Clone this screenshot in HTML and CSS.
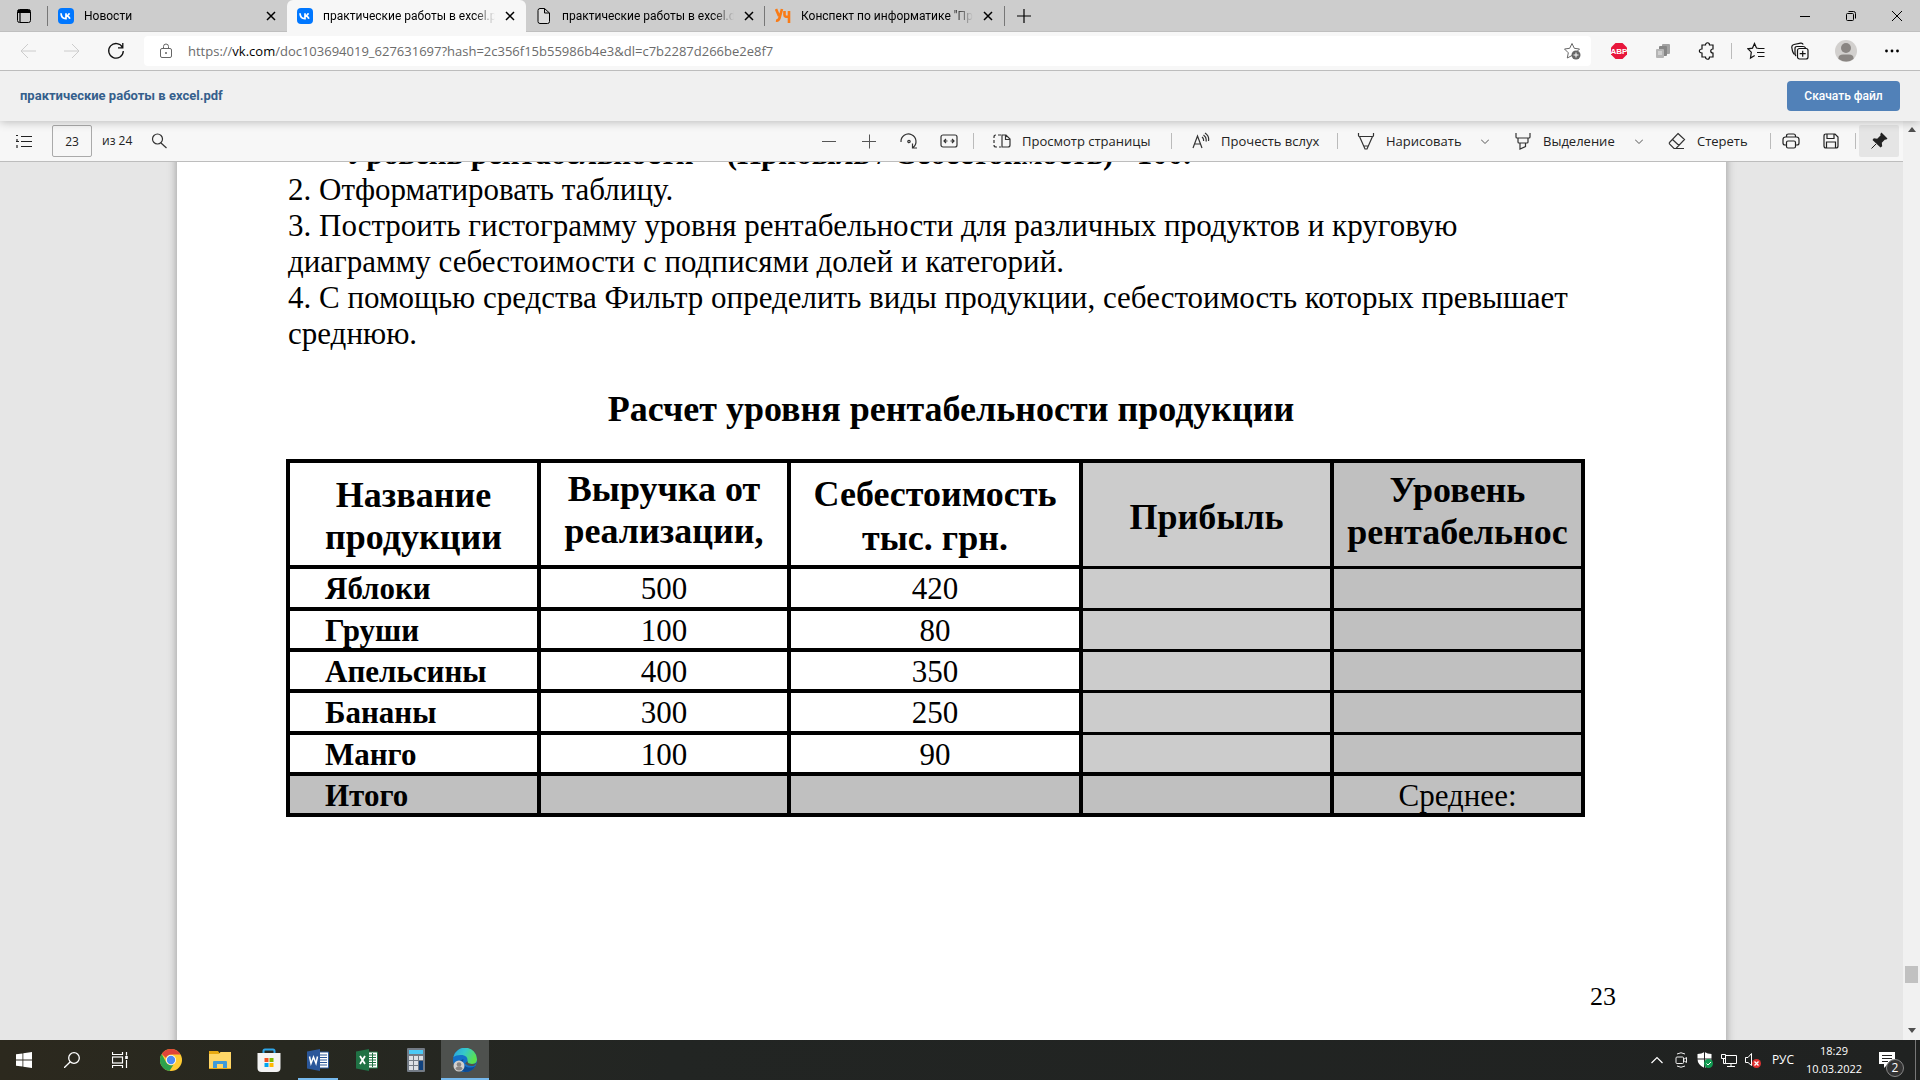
FILE: index.html
```html
<!DOCTYPE html>
<html lang="ru">
<head>
<meta charset="utf-8">
<title>практические работы в excel.pdf</title>
<link rel="stylesheet" href="styles.css">
</head>
<body>
<header class="tabstrip">
  <button class="tab-actions" aria-label="Меню вкладок"><svg width="16" height="16" viewBox="0 0 16 16"><rect x="1.500" y="1.500" width="13" height="13" rx="2" fill="none" stroke="#000"/><path d="M2 3.500h12" stroke="#000" stroke-width="3"/><path d="M4 4v10" stroke="#000" stroke-width="1.200"/></svg></button>
  <nav class="tabs">
    <div class="tab divided">
      <svg class="favicon" width="16" height="16" viewBox="0 0 16 16"><rect width="16" height="16" rx="4" fill="#07f"/><path d="M3 5.300c.2 3.400 1.800 5.400 4.800 5.400h.2V5.300M8 8c1.600-.1 2.900-1.200 3.400-2.700M8 8c1.900 0 3.300 1 3.900 2.700" fill="none" stroke="#fff" stroke-width="1.700"/></svg>
      <a class="tab-title" href="#">Новости</a>
      <button class="tab-close" aria-label="Закрыть"><svg width="10" height="10" viewBox="0 0 10 10"><path d="M1 1l8 8M9 1l-8 8"/></svg></button>
    </div>
    <div class="tab active">
      <svg class="favicon" width="16" height="16" viewBox="0 0 16 16"><rect width="16" height="16" rx="4" fill="#07f"/><path d="M3 5.300c.2 3.400 1.800 5.400 4.800 5.400h.2V5.300M8 8c1.600-.1 2.900-1.200 3.400-2.700M8 8c1.900 0 3.300 1 3.900 2.700" fill="none" stroke="#fff" stroke-width="1.700"/></svg>
      <a class="tab-title" href="#">практические работы в excel.pdf</a>
      <button class="tab-close" aria-label="Закрыть"><svg width="10" height="10" viewBox="0 0 10 10"><path d="M1 1l8 8M9 1l-8 8"/></svg></button>
    </div>
    <div class="tab">
      <svg class="favicon" width="16" height="16" viewBox="0 0 16 16"><path d="M4 .5h4.500l5 4.500v8.500q0 2-2 2H4q-2 0-2-2v-11q0-2 2-2zM8.500.5V5h5" fill="#dcdcdc" stroke="#000"/></svg>
      <a class="tab-title" href="#">практические работы в excel.docx</a>
      <button class="tab-close" aria-label="Закрыть"><svg width="10" height="10" viewBox="0 0 10 10"><path d="M1 1l8 8M9 1l-8 8"/></svg></button>
    </div>
    <div class="tab divided">
      <svg class="favicon" width="16" height="16" viewBox="0 0 16 16"><path d="M1 1l3 7M7 1L4.500 10q-1 3-3.500 2.500M9.500 3v4q0 2.500 4 1.500M14 3v12" fill="none" stroke="#f97b16" stroke-width="2.600"/></svg>
      <a class="tab-title" href="#">Конспект по информатике "Практическая</a>
      <button class="tab-close" aria-label="Закрыть"><svg width="10" height="10" viewBox="0 0 10 10"><path d="M1 1l8 8M9 1l-8 8"/></svg></button>
    </div>
    <button class="new-tab" aria-label="Новая вкладка"><svg width="16" height="16" viewBox="0 0 16 16"><path d="M8 1v14M1 8h14" stroke="#000" stroke-width="1.200"/></svg></button>
  </nav>
  <div class="window-buttons">
    <button aria-label="Свернуть"><svg width="10" height="10" viewBox="0 0 10 10"><path d="M0 5.500h10"/></svg></button>
    <button aria-label="Восстановить"><svg width="10" height="10" viewBox="0 0 10 10"><rect x=".5" y="2.500" width="7" height="7" rx="1"/><path d="M2.500 .5h5q2 0 2 2v5"/></svg></button>
    <button aria-label="Закрыть окно"><svg width="10" height="10" viewBox="0 0 10 10"><path d="M0 0l10 10M10 0L0 10"/></svg></button>
  </div>
</header>

<div class="navbar">
  <div class="nav-buttons">
    <button aria-label="Назад" disabled><svg width="16" height="16" viewBox="0 0 16 16" stroke="#ccc"><path d="M16 8H1M8 1L1 8l7 7"/></svg></button>
    <button aria-label="Вперёд" disabled><svg width="16" height="16" viewBox="0 0 16 16" stroke="#ccc"><path d="M0 8h15M8 1l7 7-7 7"/></svg></button>
    <button aria-label="Обновить"><svg width="18" height="18" viewBox="0 0 18 18" stroke="#111" stroke-width="1.300"><path d="M15.500 5.500A7.300 7.300 0 1 0 16.300 9M15.800 1v4.800H11"/></svg></button>
  </div>
  <div class="address">
    <svg width="14" height="16" viewBox="0 0 14 16" stroke="#666"><rect x="1.500" y="5.500" width="11" height="9" rx="1.500"/><path d="M4.500 5V3.500q0-2.500 2.500-2.500t2.500 2.500V5"/><circle cx="7" cy="10" r=".6" fill="#666"/></svg>
    <a class="url" href="#">https://<b>vk.com</b>/doc103694019_627631697?hash=2c356f15b55986b4e3&amp;dl=c7b2287d266be2e8f7</a>
    <button class="icon-button" aria-label="В избранное"><svg width="18" height="18" viewBox="0 0 18 18" stroke="#666"><path d="M9 1.500l2.300 4.800 5.200.7-3 3M9 13.500l-4.700 2.500 1-5.200L1.500 7l5.200-.7L9 1.500"/><circle cx="13" cy="13" r="4.500" fill="#666" stroke="none"/><path d="M13 10.500v5M10.500 13h5" stroke="#fff"/></svg></button>
  </div>
  <div class="extensions">
    <button aria-label="Adblock Plus"><svg width="18" height="18" viewBox="0 0 18 18"><path d="M5.500 1h7L17 5.500v7L12.500 17h-7L1 12.500v-7z" fill="#e8173c"/><text class="abp" x="9" y="12" text-anchor="middle">ABP</text></svg></button>
    <button aria-label="Расширение"><svg width="16" height="16" viewBox="0 0 16 16"><rect x="7" y="1" width="8" height="10" rx="1" fill="#a2a2a2"/><rect x="4" y="3" width="8" height="10" rx="1" fill="#868686"/><rect x="1" y="6" width="8" height="9" rx="1" fill="#b5b5b5"/><path d="M3 8h4v4H3z" fill="#d0d0d0"/></svg></button>
    <button aria-label="Расширения"><svg width="18" height="18" viewBox="0 0 18 18" stroke="#111" stroke-width="1.200"><path d="M4 3h3.500c0-3 4-3 4 0H15v4c-3 0-3 4 0 4v4h-3.500c0 3-4 3-4 0H4v-4c-3.500 0-3.500-4 0-4z"/></svg></button>
    <span class="divider"></span>
    <button aria-label="Избранное"><svg width="18" height="18" viewBox="0 0 18 18" stroke="#111" stroke-width="1.200"><path d="M12 6.500L9.500 6 7.500 1.500l-2 4.600L1 6.800l3.300 3.300L3.500 16l4.200-2.500M11 6.500h6.500M10 10.500h7.500M11 14.500h6.500"/></svg></button>
    <button aria-label="Коллекции"><svg width="18" height="18" viewBox="0 0 18 18" stroke="#111" stroke-width="1.200"><path d="M3.500 12.500Q2 11 1.500 9L.8 5.500Q.5 3 3 2.500l6.500-1.400q2-.3 2.700 1.400"/><path d="M5 14q-1-1-1-3V6.500q0-2 2-2h6q2 0 2.500 1.500"/><rect x="6.500" y="6.500" width="10.500" height="10.500" rx="2"/><path d="M11.700 8.700v6M8.700 11.700h6"/></svg></button>
    <button class="profile" aria-label="Профиль"><svg width="22" height="22" viewBox="0 0 22 22"><circle cx="11" cy="11" r="11" fill="#d2d0ce"/><circle cx="11" cy="8" r="5" fill="#8a8683"/><path d="M3.500 19Q3 14.500 8 14.500h6q5 0 4.500 4.500-7 5-15 0" fill="#8a8683"/></svg></button>
    <button aria-label="Ещё"><svg class="solid" width="16" height="16" viewBox="0 0 16 16"><circle cx="2.500" cy="8" r="1.400"/><circle cx="8" cy="8" r="1.400"/><circle cx="13.500" cy="8" r="1.400"/></svg></button>
  </div>
</div>

<div class="vk-bar">
  <a class="doc-name" href="#">практические работы в excel.pdf</a>
  <button class="download">Скачать файл</button>
</div>

<main class="viewer">
  <div class="pane">
    <div class="pdf-bar">
      <div class="pdf-left">
        <button class="icon-button" aria-label="Оглавление"><svg width="16" height="16" viewBox="0 0 16 16" stroke="#222"><path d="M5 3.500h11M5 8.500h11M5 13.500h11M0 2.500h2M1 6v2M3 8.500h-1M0 8.500h2M1 12v3" stroke-width="1.200"/></svg></button>
        <input class="page-field" type="text" value="23" aria-label="Страница">
        <span class="page-count">из 24</span>
        <button class="icon-button" aria-label="Поиск"><svg width="16" height="16" viewBox="0 0 16 16" stroke="#333" stroke-width="1.200"><circle cx="6.500" cy="6" r="5"/><path d="M10 10l5.500 5"/></svg></button>
      </div>
      <div class="pdf-right">
        <button class="zoom" aria-label="Уменьшить"><svg width="16" height="16" viewBox="0 0 16 16" stroke="#555"><path d="M1 8.500h14"/></svg></button>
        <button class="zoom" aria-label="Увеличить"><svg width="16" height="16" viewBox="0 0 16 16" stroke="#555"><path d="M1 8.500h14M8.500 1.500v14"/></svg></button>
        <button class="zoom" aria-label="Повернуть"><svg width="18" height="18" viewBox="0 0 18 18" stroke="#333" stroke-width="1.200"><path d="M1 10A7.500 7.500 0 1 1 13 15.500M12.500 11.500v4.500H17"/><circle cx="9" cy="9.500" r="1.200"/></svg></button>
        <button class="zoom" aria-label="По ширине"><svg width="18" height="18" viewBox="0 0 18 18" stroke="#333" stroke-width="1.200"><rect x="1" y="3" width="16" height="12" rx="2"/><path d="M4 9h3.500M10.500 9H14M6 7L4 9l2 2M12 7l2 2-2 2"/></svg></button>
        <span class="divider"></span>
        <button class="tool view"><svg width="18" height="18" viewBox="0 0 18 18" stroke="#333" stroke-width="1.200"><path d="M8 3H5M3 3q-2 0-2 2v1M1 8v3M1 13q0 2 2 2h1M6 15h2"/><path d="M9 3h4l4 4v6q0 2-2 2H9zM12.500 3v4.500H17"/></svg>Просмотр страницы</button>
        <span class="divider"></span>
        <button class="tool read"><svg width="18" height="18" viewBox="0 0 18 18" stroke="#333" stroke-width="1.200"><path d="M1 16L5.500 4 10 16M2.500 12h6M10 5q2 1.500 1.500 4M11.500 3q3.500 2.500 2.500 6.500M13 1q4.500 3 3.500 8"/></svg>Прочесть вслух</button>
        <span class="divider"></span>
        <button class="tool draw"><svg width="18" height="18" viewBox="0 0 18 18" stroke="#333" stroke-width="1.200"><path d="M1.500 1v2.500q0 1 1 1h13q1 0 1-1V1M2.500 4.500L8 17h2l5.500-12.500M7 14h4"/></svg>Нарисовать<span class="chevron"><svg width="8" height="5" viewBox="0 0 8 5" stroke="#555"><path d="M0 .5l4 4 4-4"/></svg></span></button>
        <button class="tool mark"><svg width="18" height="18" viewBox="0 0 18 18" stroke="#333" stroke-width="1.200"><path d="M2 1v4q0 1 1 1h12q1 0 1-1V1M4 6v4q0 1 1 1h8q1 0 1-1V6M6 11v6l5.500-2.500V11"/></svg>Выделение<span class="chevron"><svg width="8" height="5" viewBox="0 0 8 5" stroke="#555"><path d="M0 .5l4 4 4-4"/></svg></span></button>
        <button class="tool erase"><svg width="18" height="18" viewBox="0 0 18 18" stroke="#333" stroke-width="1.200"><path d="M10 1.500l6.500 6-8.500 9H6l-4.500-4.500q-.5-1 0-1.500zM4.500 7.500l6.500 6M8 16.500h8"/></svg>Стереть</button>
        <span class="divider"></span>
        <button class="zoom" aria-label="Печать"><svg width="18" height="18" viewBox="0 0 18 18" stroke="#222" stroke-width="1.200"><path d="M4.500 5V4q0-2 2-2h5q2 0 2 2v1M4.500 13H3q-2 0-2-2V7.500Q1 5 3.500 5h11Q17 5 17 7.500V11q0 2-2 2h-1.500"/><rect x="4.500" y="9" width="9" height="7" rx="1.500"/></svg></button>
        <button class="zoom" aria-label="Сохранить"><svg width="18" height="18" viewBox="0 0 18 18" stroke="#222" stroke-width="1.200"><path d="M4 2h9l3 3v9q0 2-2 2H4q-2 0-2-2V4q0-2 2-2zM5 2v4.500h7V2M4.500 16v-6h9v6"/></svg></button>
        <span class="divider"></span>
        <button class="zoom pinned" aria-label="Закрепить"><svg width="18" height="18" viewBox="0 0 18 18"><path d="M11.500.5l6 6-1.500 1.200-1-.2-3.200 3.300.4 3.400-1.700 1.300L2.500 8l1.300-1.700 3.400.4L10.500 3.500l-.2-1.500z" fill="#222"/><path d="M6 12l-4.500 4.500" stroke="#222"/></svg></button>
      </div>
    </div>
    <div class="document">
      <article class="sheet">
        <p class="formula">Уровень рентабельности = (Прибыль / Себестоимость) *100.</p>
        <p>2. Отформатировать таблицу.</p>
        <p>3. Построить гистограмму уровня рентабельности для различных продуктов и круговую<br>диаграмму себестоимости с подписями долей и категорий.</p>
        <p>4. С помощью средства Фильтр определить виды продукции, себестоимость которых превышает<br>среднюю.</p>
        <h1>Расчет уровня рентабельности продукции</h1>
        <table>
          <colgroup><col class="c-name"><col class="c-sales"><col class="c-cost"><col class="c-profit"><col class="c-level"></colgroup>
          <thead>
            <tr>
              <th class="h-name">Название<br>продукции</th>
              <th class="h-sales">Выручка от<br>реализации,</th>
              <th class="h-cost">Себестоимость<br>тыс. грн.</th>
              <th class="h-profit light">Прибыль</th>
              <th class="h-level dark">Уровень<br>рентабельнос</th>
            </tr>
          </thead>
          <tbody>
            <tr><th>Яблоки</th><td>500</td><td>420</td><td class="light"></td><td class="dark"></td></tr>
            <tr><th>Груши</th><td>100</td><td>80</td><td class="light"></td><td class="dark"></td></tr>
            <tr><th>Апельсины</th><td>400</td><td>350</td><td class="light"></td><td class="dark"></td></tr>
            <tr><th>Бананы</th><td>300</td><td>250</td><td class="light"></td><td class="dark"></td></tr>
            <tr><th>Манго</th><td>100</td><td>90</td><td class="light"></td><td class="dark"></td></tr>
          </tbody>
          <tfoot>
            <tr><th>Итого</th><td></td><td></td><td></td><td>Среднее:</td></tr>
          </tfoot>
        </table>
        <p class="folio">23</p>
      </article>
    </div>
  </div>
  <div class="scrollbar">
    <svg width="8" height="5" viewBox="0 0 8 5"><path d="M0 5l4-5 4 5z" fill="#505050"/></svg>
    <span class="thumb"></span>
    <svg width="8" height="5" viewBox="0 0 8 5"><path d="M0 0l4 5 4-5z" fill="#505050"/></svg>
  </div>
</main>

<footer class="taskbar">
  <div class="launchers">
    <button aria-label="Пуск"><svg class="solid" width="16" height="16" viewBox="0 0 16 16"><path d="M0 2.300L6.500 1.400v6.200H0zM7.300 1.300L16 0v7.600H7.300zM0 8.400h6.500v6.200L0 13.700zM7.300 8.400H16V16l-8.700-1.300z"/></svg></button>
    <button aria-label="Поиск"><svg width="16" height="16" viewBox="0 0 16 16" stroke="#fff" stroke-width="1.300"><circle cx="10" cy="6" r="5.300"/><path d="M6.300 9.800L0 16"/></svg></button>
    <button aria-label="Представление задач"><svg width="16" height="16" viewBox="0 0 16 16" stroke="#fff" stroke-width="1.200"><path d="M.5 0v2.500h10V0M.5 16v-2.500h10V16M14.500 0v3.500M14.500 8v8"/><rect x=".5" y="5" width="10" height="6"/><path d="M13.200 4h2.600v3h-2.600z" fill="#fff" stroke="none"/></svg></button>
  </div>
  <div class="apps">
    <button aria-label="Chrome"><svg width="22" height="22" viewBox="0 0 22 22"><circle cx="11" cy="11" r="11" fill="#fc3"/><path d="M11 0a11 11 0 0 1 9.500 5.500H11a5.500 5.500 0 0 0-5 3.500L1.800 5A11 11 0 0 1 11 0" fill="#e0443a"/><path d="M1.700 5l4.600 8.500a5.500 5.500 0 0 0 7 2.500l-3.800 6A11 11 0 0 1 1.700 5" fill="#2da14d"/><circle cx="11" cy="11" r="5" fill="#fff"/><circle cx="11" cy="11" r="4.200" fill="#4c8bf5"/></svg></button>
    <button aria-label="Проводник"><svg width="22" height="20" viewBox="0 0 22 20"><path d="M0 1h9l1.500 2H22v16H0z" fill="#e8a912"/><path d="M0 4h10l1.500-2H22v16H0z" fill="#ffd667"/><path d="M4 18v-6q0-1 1-1h12q1 0 1 1v6h-4v-4H8v4z" fill="#3f9bd8"/></svg></button>
    <button aria-label="Магазин"><svg width="24" height="24" viewBox="0 0 24 24"><path d="M6.500 7V3q0-1.500 1.500-1.500h8q1.500 0 1.500 1.500v4" fill="none" stroke="#2ea6e9" stroke-width="2"/><path d="M.5 5h23v15q0 4-4 4h-15q-4 0-4-4z" fill="#f3f3f3"/><path d="M7.500 10h4v4h-4z" fill="#f25022"/><path d="M12.500 10h4v4h-4z" fill="#7fba00"/><path d="M7.500 15h4v4h-4z" fill="#00a4ef"/><path d="M12.500 15h4v4h-4z" fill="#ffb900"/></svg></button>
    <button class="running" aria-label="Word"><svg width="22" height="22" viewBox="0 0 22 22"><path d="M12 3h9.500v16H12z" fill="#fff" stroke="#2b579a"/><path d="M13 6h7M13 8.500h7M13 11h7M13 13.500h7M13 16h7" stroke="#2b579a"/><path d="M0 2.500L13 0v22L0 19.500z" fill="#2b579a"/><path d="M2.500 7.500l1.500 7 2.500-6.500 2.500 6.500 1.500-7" fill="none" stroke="#fff" stroke-width="1.500"/></svg></button>
    <button aria-label="Excel"><svg width="22" height="22" viewBox="0 0 22 22"><path d="M12 3h9.500v16H12z" fill="#fff" stroke="#207245"/><path d="M13 6h7M13 8.500h7M13 11h7M13 13.500h7M13 16h7M16.500 4v14" stroke="#207245"/><path d="M0 2.500L13 0v22L0 19.500z" fill="#207245"/><path d="M4 7l5 8M9 7l-5 8" fill="none" stroke="#fff" stroke-width="1.800"/></svg></button>
    <button aria-label="Калькулятор"><svg width="18" height="24" viewBox="0 0 18 24"><rect width="18" height="24" rx="1" fill="#737b85"/><path d="M2 2h14v4H2z" fill="#4cc9f5"/><path d="M2 8h4v4H2zM7 8h4v4H7zM12 8h4v4h-4zM2 13h4v4H2zM7 13h4v4H7zM2 18h4v4H2zM7 18h4v4H7z" fill="#dde1e6"/><path d="M12 13h4v9h-4z" fill="#10427e"/></svg></button>
    <button class="running current" aria-label="Edge"><svg width="24" height="24" viewBox="0 0 24 24"><defs><linearGradient id="edge-wave" x1="0" y1="0" x2="1" y2=".4"><stop offset="0" stop-color="#2a9ee0"/><stop offset=".5" stop-color="#35c8cb"/><stop offset="1" stop-color="#5ae04f"/></linearGradient></defs><circle cx="12" cy="12" r="12" fill="#1470c8"/><path d="M.3 9A12 12 0 0 1 24 11.500q-.5 4.500-5 4.500-5 0-4.500-3 .5-5-5-6-6-.5-9.200 2" fill="url(#edge-wave)"/><path d="M10.500 11q-2 5.500 3 8 5 1.500 9-1-3.500 6-10.500 6-7-2-6-7.500 1-4.500 4.500-5.500" fill="#0c4b94"/><path d="M14.500 13q-.5 3 4.500 3 3 0 4.500-1.500-1 3-3.500 3.500-5 .5-8-2.500z" fill="#4e514e"/><circle cx="6" cy="18" r="5.500" fill="#d2d0ce"/><circle cx="6" cy="16.500" r="2.300" fill="#8a8683"/><path d="M2.500 21q0-2.500 3.500-2.500T9.500 21q-3.500 3-7 0" fill="#8a8683"/></svg></button>
  </div>
  <div class="tray">
    <button aria-label="Скрытые значки"><svg width="12" height="8" viewBox="0 0 12 8" stroke="#fff" stroke-width="1.200"><path d="M.5 7L6 1.500 11.500 7"/></svg></button>
    <button aria-label="Камера"><svg width="12" height="16" viewBox="0 0 12 16" stroke="#eee"><path d="M2 2q4-2.500 8 0M2 14q4 2.500 8 0M8.500 7.500l3-2v5l-3-2"/><rect x="1" y="5" width="7.500" height="6.500" rx="1"/></svg></button>
    <button aria-label="Защита"><svg width="16" height="16" viewBox="0 0 16 16"><path d="M7.500 0q3 2 7 2v5q0 6-7 9-7-3-7-9V2q4 0 7-2" fill="#fff"/><path d="M7.500 0v16M0 7h15" stroke="#222"/><circle cx="11.500" cy="11.500" r="4.500" fill="#129a52"/><path d="M9.500 11.500l1.500 1.500 3-3" fill="none" stroke="#fff"/></svg></button>
    <button aria-label="Сеть"><svg width="16" height="16" viewBox="0 0 16 16" stroke="#fff"><path d="M4.500 3.500h11v8h-11zM10 12v2.500M6 14.500h8M.5 2.500h4v4h-4zM2.500 6.500v5h2"/></svg></button>
    <button aria-label="Звук"><svg width="16" height="16" viewBox="0 0 16 16" stroke="#fff"><path d="M.5 5.500H3l3.500-4v12L3 10.500H.5z"/><circle cx="11.500" cy="11.500" r="4.500" fill="#e03131" stroke="none"/><path d="M9.500 9.500l4 4M13.500 9.500l-4 4" stroke-width="1.300"/></svg></button>
    <button class="language">РУС</button>
    <button class="clock"><span>18:29</span><span>10.03.2022</span></button>
    <button class="notices" aria-label="Уведомления"><svg width="16" height="16" viewBox="0 0 16 16"><path d="M0 0h16v12H9l-4 4v-4H0z" fill="#fff"/><path d="M3 3.500h10M3 6.500h10M3 9.500h6" stroke="#222"/></svg><span class="count">2</span></button>
  </div>
</footer>
</body>
</html>
```
FILE: styles.css
```css
* { box-sizing: border-box; }
html, body { height: 100%; margin: 0; }
body { display: flex; flex-direction: column; overflow: hidden; background: #e6e6e6; color: #000; font: 12px/16px "Open Sans", "Noto Sans", sans-serif; }
button { display: flex; align-items: center; justify-content: center; flex: none; margin: 0; padding: 0; border: 0; background: none; color: inherit; font: inherit; }
a { color: inherit; text-decoration: none; }
svg { display: block; flex: none; fill: none; }
.solid { fill: currentColor; }
.divider { flex: none; width: 1px; height: 16px; background: #bbb; }
.icon-button { width: 32px; height: 32px; }

/* Tabs */
.tabstrip { display: flex; flex: none; height: 32px; background: #cdcdcd; border-bottom: 1px solid #bfbfbf; }
.tab-actions { width: 48px; height: 20px; margin: 6px 0; border-right: 1px solid #777; }
.tabs { display: flex; flex: 1; min-width: 0; }
.tab { display: flex; align-items: center; flex: 0 1 239px; min-width: 0; height: 32px; padding: 0 11px 0 10px; gap: 10px; font-family: Roboto, sans-serif; }
.tab.active { background: #f7f7f7; border-radius: 6px 6px 0 0; }
.tab-title { flex: 1; overflow: hidden; white-space: nowrap; mask-image: linear-gradient(to right, #000 88%, transparent); }
.tab-close svg { stroke: #000; stroke-width: 1.5; }
.new-tab { width: 38px; height: 20px; margin: 6px 0; border-left: 1px solid #777; }
.tab:nth-child(3) { background: linear-gradient(#777, #777) right center / 1px 20px no-repeat; }
.window-buttons { display: flex; }
.window-buttons button { width: 46px; }
.window-buttons svg { stroke: #000; overflow: visible; }

/* Address bar */
.navbar { display: flex; align-items: center; flex: none; height: 39px; background: #f7f7f7; border-bottom: 1px solid #bdbdbd; }
.nav-buttons { display: flex; width: 144px; padding-left: 6px; }
.nav-buttons button { width: 44px; height: 36px; }
.address { display: flex; align-items: center; flex: 1; min-width: 0; height: 30px; padding: 0 3px 0 15px; gap: 15px; background: #fff; border-radius: 4px; }
.url { flex: 1; overflow: hidden; white-space: nowrap; font-size: 13px; line-height: 20px; color: #6b6b6b; }
.url b { font-weight: 400; color: #000; }
.extensions { display: flex; align-items: center; padding: 0 6px; }
.extensions button { width: 44px; height: 36px; }
.extensions .profile { margin: 0 2px; }
.extensions .divider { margin: 0 2px; }
.abp { font: 700 8px "Liberation Sans", sans-serif; fill: #fff; }

/* Document header */
.vk-bar { position: relative; display: flex; align-items: center; justify-content: space-between; flex: none; height: 50px; padding: 0 20px; background: #f0f0f0; box-shadow: 0 0 10px rgba(0, 0, 0, .3); clip-path: inset(0 0 -12px 0); font: 700 13px/18px Roboto, sans-serif; }
.doc-name { color: #355f8c; }
.download { width: 113px; height: 30px; border-radius: 4px; background: #5181b8; color: #fff; font-size: 12px; font-weight: 500; }

/* PDF toolbar */
.viewer { display: flex; flex: 1; min-height: 0; }
.pane { display: flex; flex-direction: column; flex: 1; min-width: 0; }
.pdf-bar { display: flex; align-items: center; justify-content: space-between; flex: none; height: 41px; padding: 0 4px 0 8px; background: #f7f7f7; border-bottom: 1px solid #bdbdbd; color: #222; font-size: 13px; line-height: 20px; }
.pdf-left, .pdf-right { display: flex; align-items: center; }
.page-field { width: 40px; height: 32px; margin: 0 10px 0 12px; padding: 0; border: 1px solid #aaa; border-radius: 2px; background: #f7f7f7; text-align: center; font: inherit; font-size: 12px; color: inherit; }
.page-count { width: 41px; font-size: 12px; }
.zoom { width: 40px; height: 32px; }
.zoom + .divider { margin: 0 4px; }
.tool { justify-content: flex-start; height: 32px; padding-left: 10px; gap: 11px; white-space: nowrap; }
.view { width: 193px; padding-left: 15px; }
.read { width: 165px; padding-left: 20px; }
.draw { width: 166px; padding-left: 19px; }
.mark { width: 154px; }
.erase { width: 112px; }
.chevron { margin-left: auto; margin-right: 15px; }
.pinned { margin-left: -1px; background: #e5e5e5; border-radius: 2px; }

/* Page */
.document { flex: 1; overflow: hidden; min-height: 0; background: #e6e6e6; }
.sheet { width: 82%; max-width: 1549px; min-height: calc(100% + 40px); margin: -26px auto 0; padding: 0 110px 0 109px; background: #fff; box-shadow: 0 0 9px rgba(0, 0, 0, .35); font: 31px/36px "Liberation Serif", serif; }
.sheet p { margin: 0; padding-left: 2px; white-space: nowrap; }
.sheet .formula { padding-left: 60px; font-weight: 700; }
h1 { margin: 36px 0 29px; text-align: center; font-size: 36px; line-height: 42px; }
table { width: 1299px; max-width: 100%; table-layout: fixed; border-collapse: separate; border-spacing: 0; border: solid #000; border-width: 4px 0 0 4px; }
.c-name, .c-profit, .c-level { width: 251px; }
.c-sales { width: 250px; }
td, th { height: 41px; padding: 3px 0 0; border: solid #000; border-width: 0 4px 4px 0; text-align: center; vertical-align: top; white-space: nowrap; line-height: 34px; }
tbody th, tfoot th { padding-left: 35px; text-align: left; }
tbody tr:first-child > *, tbody tr:nth-child(4) > * { height: 42px; }
thead th { height: 106px; padding-top: 11px; font-size: 36px; line-height: 42px; }
thead .h-sales { padding-top: 5px; }
thead .h-cost { padding-top: 9px; line-height: 44px; }
thead .h-profit { padding-top: 33px; }
thead .h-level { padding-top: 6px; }
.light { background: #ccc; border-bottom-width: 3px; }
.dark { background: #c0c0c0; border-bottom-width: 3px; }
tbody tr:last-child > * { border-bottom-width: 4px; }
tfoot { background: #c0c0c0; }
.sheet .folio { margin-top: 165px; text-align: right; font-size: 26px; line-height: 30px; }

/* Scrollbar */
.scrollbar { display: flex; flex-direction: column; align-items: center; flex: none; width: 17px; padding: 6px 0 7px; background: #f1f1f1; }
.thumb { width: 13px; height: 17px; margin: auto 0 45px; background: #c1c1c1; }

/* Taskbar */
.taskbar { display: flex; flex: none; height: 40px; background: linear-gradient(to right, #2c291e, #272820 15%, #222523 35%, #202221); color: #fff; }
.launchers { display: flex; }
.launchers button { width: 48px; }
.apps { display: flex; gap: 1px; margin-left: 3px; }
.apps button { width: 48px; height: 40px; }
.running { background: linear-gradient(#76b9ed, #76b9ed) center bottom / 40px 2px no-repeat; }
.apps .current { background-color: #4e514e; background-size: 48px 2px; }
.tray { display: flex; align-items: center; margin-left: auto; padding-right: 4px; }
.tray button { width: 24px; height: 40px; }
.tray .language { width: 36px; }
.tray .clock { flex-direction: column; width: 84px; margin-left: -9px; line-height: 18px; font-size: 11px; white-space: nowrap; }
.tray .notices { position: relative; justify-content: flex-start; width: 40px; padding-left: 3px; border-right: 1px solid #777; }
.count { position: absolute; left: 10px; top: 19px; width: 18px; height: 18px; border: 1px solid #888; border-radius: 50%; background: #333; line-height: 16px; }
```
